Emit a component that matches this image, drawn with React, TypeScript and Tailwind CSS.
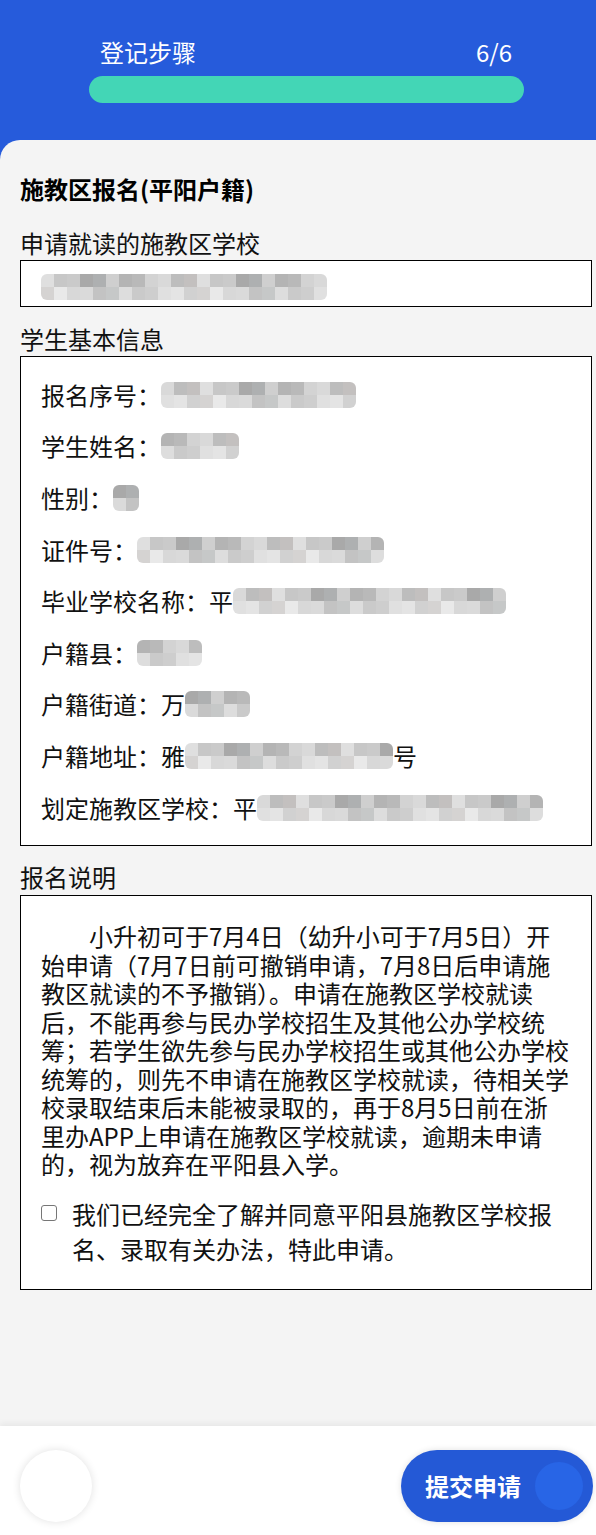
import React from 'react';

const greys = ['#b4b4b4', '#c7c7c7', '#d3d3d3', '#a9a9a9', '#bdbdbd', '#cfcfcf', '#dfdfdf', '#b9b9b9', '#cacaca', '#d9d9d9', '#aeb0b1', '#c3c0bf'];

// pixelated privacy blur over personal data
const Mosaic = ({ w, seed = 1 }: { w: number; seed?: number }) => {
    const cols = Math.max(1, Math.round(w / 13));
    return (
        <span className="inline-flex flex-col align-middle overflow-hidden rounded-[6px] blur-[0.4px]">
            {[0, 1].map((r) => (
                <span key={r} className="flex">
                    {Array.from({ length: cols }).map((_, i) => (
                        <span
                            key={i}
                            className="block w-[13px] h-[13px]"
                            style={{ background: greys[(i * 7 + r * 5 + seed * 3) % greys.length], opacity: r === 1 ? 0.7 : 1 }}
                        />
                    ))}
                </span>
            ))}
        </span>
    );
};

const rows: { label: string; pre?: string; w: number; post?: string }[] = [
    { label: '报名序号：', w: 195 },
    { label: '学生姓名：', w: 75 },
    { label: '性别：', w: 26 },
    { label: '证件号：', w: 250 },
    { label: '毕业学校名称：', pre: '平', w: 275 },
    { label: '户籍县：', w: 62 },
    { label: '户籍街道：', pre: '万', w: 65 },
    { label: '户籍地址：', pre: '雅', w: 205, post: '号' },
    { label: '划定施教区学校：', pre: '平', w: 292 },
];

export default function App() {
    return (
        <div className="h-[1535px] flex flex-col bg-[#265bdb] font-['Noto_Sans_CJK_SC','Noto_Sans',sans-serif] text-[#111]">
            {/* Header */}
            <div className="h-[140px] shrink-0 pt-[37px]">
                <div className="flex justify-between pl-[100px] pr-[84px] text-[24px] leading-[30px] text-white">
                    <span>登记步骤</span>
                    <span>6/6</span>
                </div>
                <div className="mt-[9px] ml-[89px] mr-[72px] h-[27px] rounded-full bg-[#43d6b6]"></div>
            </div>

            {/* Body */}
            <div className="flex-1 bg-[#f4f4f4] rounded-tl-[20px] pl-[20px] pr-[4px] pt-[34px] text-[24px]">
                <div className="font-bold leading-[30px] text-black">施教区报名(平阳户籍)</div>

                <div className="mt-[24px] leading-[30px]">申请就读的施教区学校</div>
                <div className="mt-[2px] h-[47px] border border-black bg-white overflow-hidden pl-[20px] pt-[5px]">
                    <Mosaic w={290} seed={2} />
                </div>

                <div className="mt-[17px] leading-[30px]">学生基本信息</div>
                <div className="mt-[2px] h-[490px] border border-black bg-white pl-[20px] pt-[12px]">
                    {rows.map((r, i) => (
                        <div key={i} className="h-[51.6px] flex items-center whitespace-nowrap">
                            <span>{r.label}</span>
                            {r.pre && <span>{r.pre}</span>}
                            <Mosaic w={r.w} seed={i + 3} />
                            {r.post && <span>{r.post}</span>}
                        </div>
                    ))}
                </div>

                <div className="mt-[16px] leading-[30px]">报名说明</div>
                <div className="mt-[3px] h-[395px] border border-black bg-white pl-[20px] pr-[21px] pt-[26px]">
                    <p className="leading-[28.5px] indent-[2em]">
                        小升初可于7月4日（幼升小可于7月5日）开始申请（7月7日前可撤销申请，7月8日后申请施教区就读的不予撤销）。申请在施教区学校就读后，不能再参与民办学校招生及其他公办学校统筹；若学生欲先参与民办学校招生或其他公办学校统筹的，则先不申请在施教区学校就读，待相关学校录取结束后未能被录取的，再于8月5日前在浙里办APP上申请在施教区学校就读，逾期未申请的，视为放弃在平阳县入学。
                    </p>
                    <label className="mt-[17px] flex">
                        <span className="mt-[9px] w-[16px] h-[16px] shrink-0 rounded-[3px] border-[1.5px] border-[#767676] bg-white"></span>
                        <span className="ml-[15px] leading-[35px]">我们已经完全了解并同意平阳县施教区学校报名、录取有关办法，特此申请。</span>
                    </label>
                </div>
            </div>

            {/* Bottom bar */}
            <div className="h-[109px] shrink-0 bg-white shadow-[0_-3px_6px_rgba(0,0,0,0.05)] flex items-start justify-between pl-[20px] pr-[3px] pt-[24px]">
                <div className="w-[72px] h-[72px] rounded-full bg-white shadow-[0_0_8px_rgba(0,0,0,0.12)]"></div>
                <div className="w-[192px] h-[72px] rounded-full bg-[#2459d6] shadow-[0_0_6px_rgba(0,0,0,0.12)] flex items-center pl-[24px] pr-[10px] justify-between">
                    <span className="text-white font-bold text-[24px] leading-[30px]">提交申请</span>
                    <span className="w-[48px] h-[48px] rounded-full bg-[#2865e6]"></span>
                </div>
            </div>
        </div>
    );
}
